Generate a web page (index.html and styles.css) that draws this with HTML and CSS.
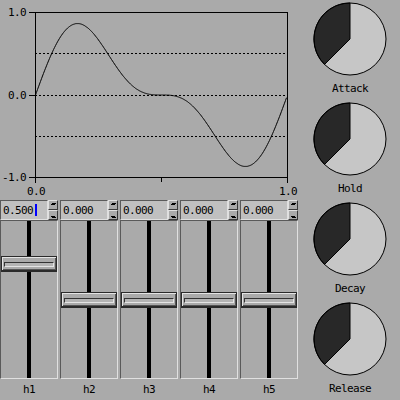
FILE: index.html
```html
<!DOCTYPE html>
<html lang="en">
<head>
  <meta charset="UTF-8" />
  <title>Harmonics</title>
  <link rel="stylesheet" href="styles.css">
</head>
<body>

  <div class="app">
    <div class="left">

      <!-- waveform plot -->
      <svg class="plot" width="300" height="200" viewBox="0 0 300 200">
        <g class="grid">
          <line x1="35" y1="53.5" x2="287" y2="53.5" />
          <line x1="35" y1="95.5" x2="287" y2="95.5" />
          <line x1="35" y1="136.5" x2="287" y2="136.5" />
        </g>
        <g class="axes">
          <rect x="35.5" y="12.5" width="252" height="165" />
          <line x1="29" y1="12.5" x2="35" y2="12.5" />
          <line x1="29" y1="95.5" x2="35" y2="95.5" />
          <line x1="29" y1="177.5" x2="35" y2="177.5" />
          <line x1="35.5" y1="177" x2="35.5" y2="183" />
          <line x1="161.5" y1="177" x2="161.5" y2="182" />
          <line x1="287.5" y1="177" x2="287.5" y2="183" />
        </g>
        <polyline id="wave" class="wave" points="" />
        <g class="labels">
          <text x="26" y="16" text-anchor="end">1.0</text>
          <text x="26" y="99" text-anchor="end">0.0</text>
          <text x="26" y="181" text-anchor="end">-1.0</text>
          <text x="36" y="195" text-anchor="middle">0.0</text>
          <text x="288" y="195" text-anchor="middle">1.0</text>
        </g>
      </svg>

      <div class="sliders">
        <div class="harmonic">
          <div class="spinner">
            <div class="field">0.500<span class="caret"></span></div>
            <div class="arrows"><span class="btn up"></span><span class="btn down"></span></div>
          </div>
          <div class="slider">
            <div class="track"></div>
            <div class="knob" style="top: 35px"></div>
          </div>
          <div class="name">h1</div>
        </div>
        <div class="harmonic">
          <div class="spinner">
            <div class="field">0.000</div>
            <div class="arrows"><span class="btn up"></span><span class="btn down"></span></div>
          </div>
          <div class="slider">
            <div class="track"></div>
            <div class="knob" style="top: 71px"></div>
          </div>
          <div class="name">h2</div>
        </div>
        <div class="harmonic">
          <div class="spinner">
            <div class="field">0.000</div>
            <div class="arrows"><span class="btn up"></span><span class="btn down"></span></div>
          </div>
          <div class="slider">
            <div class="track"></div>
            <div class="knob" style="top: 71px"></div>
          </div>
          <div class="name">h3</div>
        </div>
        <div class="harmonic">
          <div class="spinner">
            <div class="field">0.000</div>
            <div class="arrows"><span class="btn up"></span><span class="btn down"></span></div>
          </div>
          <div class="slider">
            <div class="track"></div>
            <div class="knob" style="top: 71px"></div>
          </div>
          <div class="name">h4</div>
        </div>
        <div class="harmonic">
          <div class="spinner">
            <div class="field">0.000</div>
            <div class="arrows"><span class="btn up"></span><span class="btn down"></span></div>
          </div>
          <div class="slider">
            <div class="track"></div>
            <div class="knob" style="top: 71px"></div>
          </div>
          <div class="name">h5</div>
        </div>
      </div>

    </div>

    <div class="dials">
      <div class="dial">
        <svg width="100" height="80" viewBox="0 0 100 80">
          <circle class="face" cx="50" cy="39" r="36" />
          <path class="fill" d="M50,39 L50,3 A36,36 0 0,0 24.5,64.5 Z" />
          <circle class="rim" cx="50" cy="39" r="36" />
        </svg>
        <div class="name">Attack</div>
      </div>
      <div class="dial">
        <svg width="100" height="80" viewBox="0 0 100 80">
          <circle class="face" cx="50" cy="39" r="36" />
          <path class="fill" d="M50,39 L50,3 A36,36 0 0,0 24.5,64.5 Z" />
          <circle class="rim" cx="50" cy="39" r="36" />
        </svg>
        <div class="name">Hold</div>
      </div>
      <div class="dial">
        <svg width="100" height="80" viewBox="0 0 100 80">
          <circle class="face" cx="50" cy="39" r="36" />
          <path class="fill" d="M50,39 L50,3 A36,36 0 0,0 24.5,64.5 Z" />
          <circle class="rim" cx="50" cy="39" r="36" />
        </svg>
        <div class="name">Decay</div>
      </div>
      <div class="dial">
        <svg width="100" height="80" viewBox="0 0 100 80">
          <circle class="face" cx="50" cy="39" r="36" />
          <path class="fill" d="M50,39 L50,3 A36,36 0 0,0 24.5,64.5 Z" />
          <circle class="rim" cx="50" cy="39" r="36" />
        </svg>
        <div class="name">Release</div>
      </div>
    </div>
  </div>

  <script src="script.js"></script>

</body>
</html>
```

FILE: styles.css
```css
body {
  margin: 0;
  background: #aaaaaa;
  color: #000;
  font-family: "DejaVu Sans Mono", monospace;
  font-size: 11px;
  letter-spacing: -0.6px;
}

.app {
  display: flex;
  width: 400px;
  height: 400px;
}

.left {
  width: 300px;
  display: flex;
  flex-direction: column;
}

.plot {
  display: block;
}

.plot .grid line {
  stroke: #000;
  stroke-width: 1;
  stroke-dasharray: 2 2;
  shape-rendering: crispEdges;
}

.plot .axes rect,
.plot .axes line {
  fill: none;
  stroke: #000;
  stroke-width: 1;
  shape-rendering: crispEdges;
}

.wave {
  fill: none;
  stroke: #000;
  stroke-width: 1;
}

.plot text {
  font-family: "DejaVu Sans Mono", monospace;
  font-size: 11px;
  letter-spacing: -0.6px;
}

/* harmonic sliders */
.sliders {
  display: flex;
  gap: 2px;
  height: 200px;
}

.harmonic {
  width: 58px;
  display: flex;
  flex-direction: column;
}

.spinner {
  display: flex;
  height: 20px;
}

.field {
  width: 48px;
  box-sizing: border-box;
  background: #c0c0c0;
  border-top: 1px solid #5a5a5a;
  border-left: 1px solid #5a5a5a;
  border-right: 1px solid #e0e0e0;
  border-bottom: 1px solid #e0e0e0;
  padding: 3px 0 0 2px;
  line-height: 13px;
  display: flex;
}

.caret {
  width: 2px;
  height: 12px;
  margin-left: 2px;
  background: #0000ff;
}

.arrows {
  width: 10px;
  display: flex;
  flex-direction: column;
}

.btn {
  height: 10px;
  box-sizing: border-box;
  background: #aaaaaa;
  border-top: 1px solid #e0e0e0;
  border-left: 1px solid #e0e0e0;
  border-right: 1px solid #3a3a3a;
  border-bottom: 1px solid #3a3a3a;
  position: relative;
}

.btn::after {
  content: "";
  position: absolute;
  left: 2px;
  width: 4px;
  height: 1px;
  background: #000;
}

.btn.up::after {
  top: 3px;
  box-shadow: 1px -1px 0 -0px #000;
}

.btn.down::after {
  top: 5px;
  box-shadow: 1px 1px 0 -0px #000;
}

.slider {
  position: relative;
  height: 159px;
  box-sizing: border-box;
  border-top: 1px solid #5a5a5a;
  border-left: 1px solid #5a5a5a;
  border-right: 1px solid #e0e0e0;
  border-bottom: 1px solid #e0e0e0;
  display: flex;
  justify-content: center;
}

.track {
  width: 4px;
  background: #000;
}

.knob {
  position: absolute;
  left: 0;
  right: 0;
  height: 16px;
  box-sizing: border-box;
  background: #aaaaaa;
  border: 1px solid #2a2a2a;
  border-bottom-width: 2px;
  box-shadow: inset 1px 1px 0 #e4e4e4, inset -1px -1px 0 #555;
}

.knob::after {
  content: "";
  position: absolute;
  left: 2px;
  right: 2px;
  top: 5px;
  height: 3px;
  border-top: 1px solid #333;
  border-left: 1px solid #333;
  border-bottom: 1px solid #e4e4e4;
  border-right: 1px solid #e4e4e4;
  background: #b4b4b4;
}

.name {
  text-align: center;
  line-height: 21px;
}

/* envelope dials */
.dials {
  width: 100px;
  display: flex;
  flex-direction: column;
}

.dial {
  height: 100px;
  display: flex;
  flex-direction: column;
}

.dial svg {
  display: block;
}

.dial .name {
  line-height: 18px;
}

.face {
  fill: #c6c6c6;
}

.fill {
  fill: #282828;
  stroke: #000;
  stroke-width: 1;
}

.rim {
  fill: none;
  stroke: #000;
  stroke-width: 1;
}
```

FILE: script.js
```js
// draw the waveform from the harmonic amplitudes
const amps = [1, 0.5];
const total = amps.reduce((a, b) => a + b, 0);
const pts = [];
for (let i = 0; i <= 251; i++) {
  const x = i / 252;
  let y = 0;
  amps.forEach((a, k) => { y += a * Math.sin(2 * Math.PI * (k + 1) * x); });
  y = y / total;
  pts.push((35.5 + i).toFixed(1) + ',' + (95 - y * 82.5).toFixed(1));
}
document.getElementById('wave').setAttribute('points', pts.join(' '));
```
